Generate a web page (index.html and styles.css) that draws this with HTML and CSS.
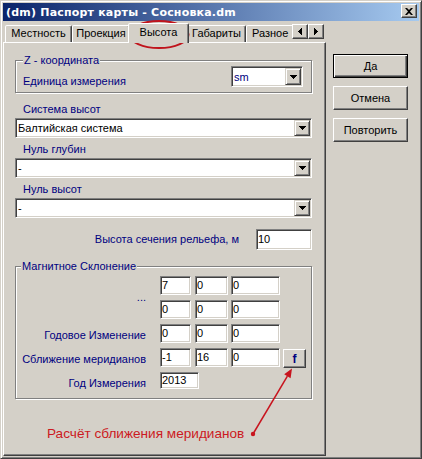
FILE: index.html
```html
<!DOCTYPE html>
<html lang="ru">
<head>
<meta charset="utf-8">
<title>Паспорт карты</title>
<link rel="stylesheet" href="styles.css">
</head>
<body>
<div class="window">
  <div class="titlebar">
    <span class="title">(dm) Паспорт карты - Сосновка.dm</span>
    <span class="close"><svg width="8" height="7" viewBox="0 0 8 7"><path d="M0 0H2L4 2L6 0H8L5 3.5L8 7H6L4 5L2 7H0L3 3.5Z"/></svg></span>
  </div>
  <div class="client">
    <div class="tabctl">
      <div class="tabstrip">
        <div class="tab t1">Местность</div>
        <div class="tab t2">Проекция</div>
        <div class="tab t3">Высота</div>
        <div class="tab t4">Габариты</div>
        <div class="tab t5">Разное</div>
        <div class="spin"><svg width="4" height="7" viewBox="0 0 4 7"><path d="M4 0V7H3V6H2V5H1V4H0V3H1V2H2V1H3V0Z"/></svg></div>
        <div class="spin"><svg width="4" height="7" viewBox="0 0 4 7"><path d="M0 0V7H1V6H2V5H3V4H4V3H3V2H2V1H1V0Z"/></svg></div>
      </div>
      <div class="panel">
        <fieldset class="group gz">
          <legend>Z - координата</legend>
          <div class="zrow">
            <span class="lbl">Единица измерения</span>
            <div class="combo small"><span class="val navy">sm</span><span class="drop"><svg width="7" height="4" viewBox="0 0 7 4"><path d="M0 0H7V1H6V2H5V3H4V4H3V3H2V2H1V1H0Z"/></svg></span></div>
          </div>
        </fieldset>
        <div class="lbl flbl first">Система высот</div>
        <div class="combo"><span class="val">Балтийская система</span><span class="drop"><svg width="7" height="4" viewBox="0 0 7 4"><path d="M0 0H7V1H6V2H5V3H4V4H3V3H2V2H1V1H0Z"/></svg></span></div>
        <div class="lbl flbl">Нуль глубин</div>
        <div class="combo"><span class="val">-</span><span class="drop"><svg width="7" height="4" viewBox="0 0 7 4"><path d="M0 0H7V1H6V2H5V3H4V4H3V3H2V2H1V1H0Z"/></svg></span></div>
        <div class="lbl flbl">Нуль высот</div>
        <div class="combo"><span class="val">-</span><span class="drop"><svg width="7" height="4" viewBox="0 0 7 4"><path d="M0 0H7V1H6V2H5V3H4V4H3V3H2V2H1V1H0Z"/></svg></span></div>
        <div class="hrow">
          <span class="lbl">Высота сечения рельефа, м</span>
          <span class="inp hinp">10</span>
        </div>
        <fieldset class="group gm">
          <legend>Магнитное Склонение</legend>
          <div class="mgrid">
            <span class="lbl dots">...</span>
            <span class="inp c2">7</span><span class="inp c3">0</span><span class="inp c4">0</span>
            <span class="inp c2">0</span><span class="inp c3">0</span><span class="inp c4">0</span>
            <span class="lbl">Годовое Изменение</span>
            <span class="inp c2">0</span><span class="inp c3">0</span><span class="inp c4">0</span>
            <span class="lbl">Сближение меридианов</span>
            <span class="inp c2">-1</span><span class="inp c3">16</span><span class="inp c4">0</span>
            <span class="fbtn c5">f</span>
            <span class="lbl">Год Измерения</span>
            <span class="inp year">2013</span>
          </div>
        </fieldset>
        <div class="note">Расчёт сближения меридианов</div>
      </div>
    </div>
    <div class="buttons">
      <button class="btn default">Да</button>
      <button class="btn">Отмена</button>
      <button class="btn">Повторить</button>
    </div>
  </div>
</div>
<svg class="overlay" width="422" height="459" viewBox="0 0 422 459">
  <ellipse cx="159" cy="34.5" rx="29.5" ry="13.5" fill="none" stroke="#c0141c" stroke-width="2"/>
  <line x1="253" y1="434" x2="287.4" y2="376.2" stroke="#c8141e" stroke-width="1.5"/>
  <polygon points="292,368.5 290.6,378.3 284.2,374.3" fill="#c8141e"/>
  <circle cx="253" cy="434" r="2.2" fill="#c8141e"/>
</svg>
</body>
</html>
```

FILE: styles.css
```css
* { box-sizing: border-box; }
html, body { margin: 0; padding: 0; }
body {
  position: relative;
  width: 422px;
  height: 459px;
  overflow: hidden;
  background: #d4d0c8;
  font-family: "Liberation Sans", Arial, sans-serif;
  font-size: 11px;
  color: #000;
}
.window {
  width: 422px;
  height: 459px;
  display: flex;
  flex-direction: column;
  padding: 2px;
  background: #d4d0c8;
  border: 1px solid;
  border-color: #d4d0c8 #404040 #404040 #d4d0c8;
  box-shadow: inset 1px 1px 0 #fff, inset -1px -1px 0 #808080;
}
.titlebar {
  height: 18px;
  flex: none;
  display: flex;
  align-items: center;
  justify-content: space-between;
  padding: 0 2px 0 3px;
  background: linear-gradient(to right, #0a246a, #a6caf0);
}
.title {
  color: #fff;
  font-family: "DejaVu Sans", Verdana, sans-serif;
  font-weight: bold;
  font-size: 11px;
  letter-spacing: 0.2px;
  line-height: 13px;
  padding-top: 1px;
  white-space: nowrap;
}
.close {
  align-self: flex-start;
  margin-top: 1px;
  width: 16px;
  height: 14px;
  display: flex;
  align-items: center;
  justify-content: center;
  background: #d4d0c8;
  border: 1px solid;
  border-color: #fff #404040 #404040 #fff;
  box-shadow: inset -1px -1px 0 #808080;
}
.close svg, .spin svg, .drop svg { display: block; }
.client { flex: 1; display: flex; min-height: 0; }
.tabctl { width: 323px; flex: none; display: flex; flex-direction: column; }
.tabstrip {
  height: 21px;
  flex: none;
  display: flex;
  align-items: flex-end;
  padding-left: 2px;
}
.tab {
  height: 17px;
  flex: none;
  line-height: 15px;
  text-align: center;
  white-space: nowrap;
  overflow: hidden;
  background: #d4d0c8;
  border: 1px solid;
  border-bottom: 0;
  border-color: #fff #404040 transparent #fff;
  border-radius: 2px 2px 0 0;
  box-shadow: inset -1px 0 0 #808080;
}
.t1 { width: 67px; }
.t2 { width: 58px; }
.t3 {
  width: 61px;
  height: 20px;
  margin: 0 -2px -1px;
  position: relative;
  z-index: 1;
  line-height: 16px;
}
.t4 { width: 59px; }
.t5 {
  width: 46px;
  border-right: 0;
  border-top-right-radius: 0;
  box-shadow: none;
  text-align: left;
  padding-left: 5px;
}
.spin {
  flex: none;
  align-self: flex-start;
  margin-top: 3px;
  width: 16px;
  height: 15px;
  display: flex;
  align-items: center;
  justify-content: center;
  background: #d4d0c8;
  border: 1px solid;
  border-color: #fff #404040 #404040 #fff;
  box-shadow: inset -1px -1px 0 #808080;
}
.panel {
  flex: 1;
  min-height: 0;
  border: 1px solid;
  border-color: #fff #404040 #404040 #fff;
  box-shadow: inset -1px -1px 0 #808080;
  padding: 11px 13px 0 11px;
}
.lbl { color: #000080; line-height: 13px; white-space: nowrap; }
.navy { color: #000080; }
.group {
  margin: 0;
  min-width: 0;
  border: 1px solid #808080;
  box-shadow: inset 1px 1px 0 #fff, 1px 1px 0 #fff;
}
.group legend {
  margin-left: 0;
  padding: 0 1px;
  line-height: 12px;
  color: #000080;
  background: #d4d0c8;
}
.gz { padding: 0 8px 5px 7px; }
.zrow { display: flex; justify-content: space-between; align-items: flex-end; }
.zrow .lbl { margin-bottom: -1px; }
.combo {
  display: flex;
  height: 20px;
  padding: 1px;
  background: #fff;
  border: 1px solid;
  border-color: #808080 #fff #fff #808080;
  box-shadow: inset 1px 1px 0 #404040, inset -1px -1px 0 #d4d0c8;
}
.combo.small { width: 72px; height: 21px; }
.val {
  flex: 1;
  display: flex;
  align-items: center;
  padding-left: 1px;
  white-space: nowrap;
  overflow: hidden;
}
.drop {
  width: 16px;
  flex: none;
  display: flex;
  align-items: center;
  justify-content: center;
  background: #d4d0c8;
  border: 1px solid;
  border-color: #d4d0c8 #404040 #404040 #d4d0c8;
  box-shadow: inset 1px 1px 0 #fff, inset -1px -1px 0 #808080;
}
.flbl { margin: 5px 0 2px 8px; }
.flbl.first { margin-top: 10px; }
.inp {
  display: block;
  height: 19px;
  padding: 0 1px;
  line-height: 17px;
  background: #fff;
  border: 1px solid;
  border-color: #808080 #fff #fff #808080;
  box-shadow: inset 1px 1px 0 #404040, inset -1px -1px 0 #d4d0c8;
  white-space: nowrap;
  overflow: hidden;
}
.hrow {
  margin-top: 11px;
  display: flex;
  justify-content: flex-end;
  align-items: center;
}
.hrow .lbl { margin-right: 17px; }
.hinp { width: 56px; height: 21px; line-height: 19px; }
.gm { margin-top: 10px; padding: 4px 0 7px 0; }
.gm legend { margin-left: 5px; }
.mgrid {
  display: grid;
  grid-template-columns: 144px 35px 36px 52px 23px;
  grid-auto-rows: 19px;
  row-gap: 5px;
}
.mgrid .lbl {
  grid-column: 1;
  text-align: right;
  padding-right: 14px;
  align-self: end;
  margin-bottom: 1px;
}
.mgrid .dots { grid-row: span 2; align-self: center; margin-bottom: 0; }
.c2 { grid-column: 2; width: 31px; }
.c3 { grid-column: 3; width: 33px; }
.c4 { grid-column: 4; width: 49px; }
.c5 { grid-column: 5; }
.year { grid-column: 2 / span 2; width: 39px; height: 17px; line-height: 15px; }
.fbtn {
  width: 23px;
  height: 19px;
  margin-top: 1px;
  display: flex;
  align-items: center;
  justify-content: center;
  font-weight: bold;
  font-size: 12px;
  color: #000080;
  background: #d4d0c8;
  border: 1px solid;
  border-color: #fff #404040 #404040 #fff;
  box-shadow: inset -1px -1px 0 #808080;
}
.note {
  margin: 27px 0 0 32px;
  font-size: 13.6px;
  line-height: 16px;
  color: #cc1a22;
  white-space: nowrap;
}
.buttons {
  width: 75px;
  flex: none;
  margin: 33px 0 0 7px;
  display: flex;
  flex-direction: column;
  gap: 8px;
}
.btn {
  width: 75px;
  height: 24px;
  padding: 0;
  margin: 0;
  font: 11px "Liberation Sans", Arial, sans-serif;
  color: #000;
  background: #d4d0c8;
  border: 1px solid;
  border-color: #fff #404040 #404040 #fff;
  box-shadow: inset -1px -1px 0 #808080;
}
.btn.default {
  border-color: #000;
  box-shadow: inset 1px 1px 0 #fff, inset -1px -1px 0 #404040, inset -2px -2px 0 #808080;
}
.overlay { position: absolute; left: 0; top: 0; pointer-events: none; }
```
